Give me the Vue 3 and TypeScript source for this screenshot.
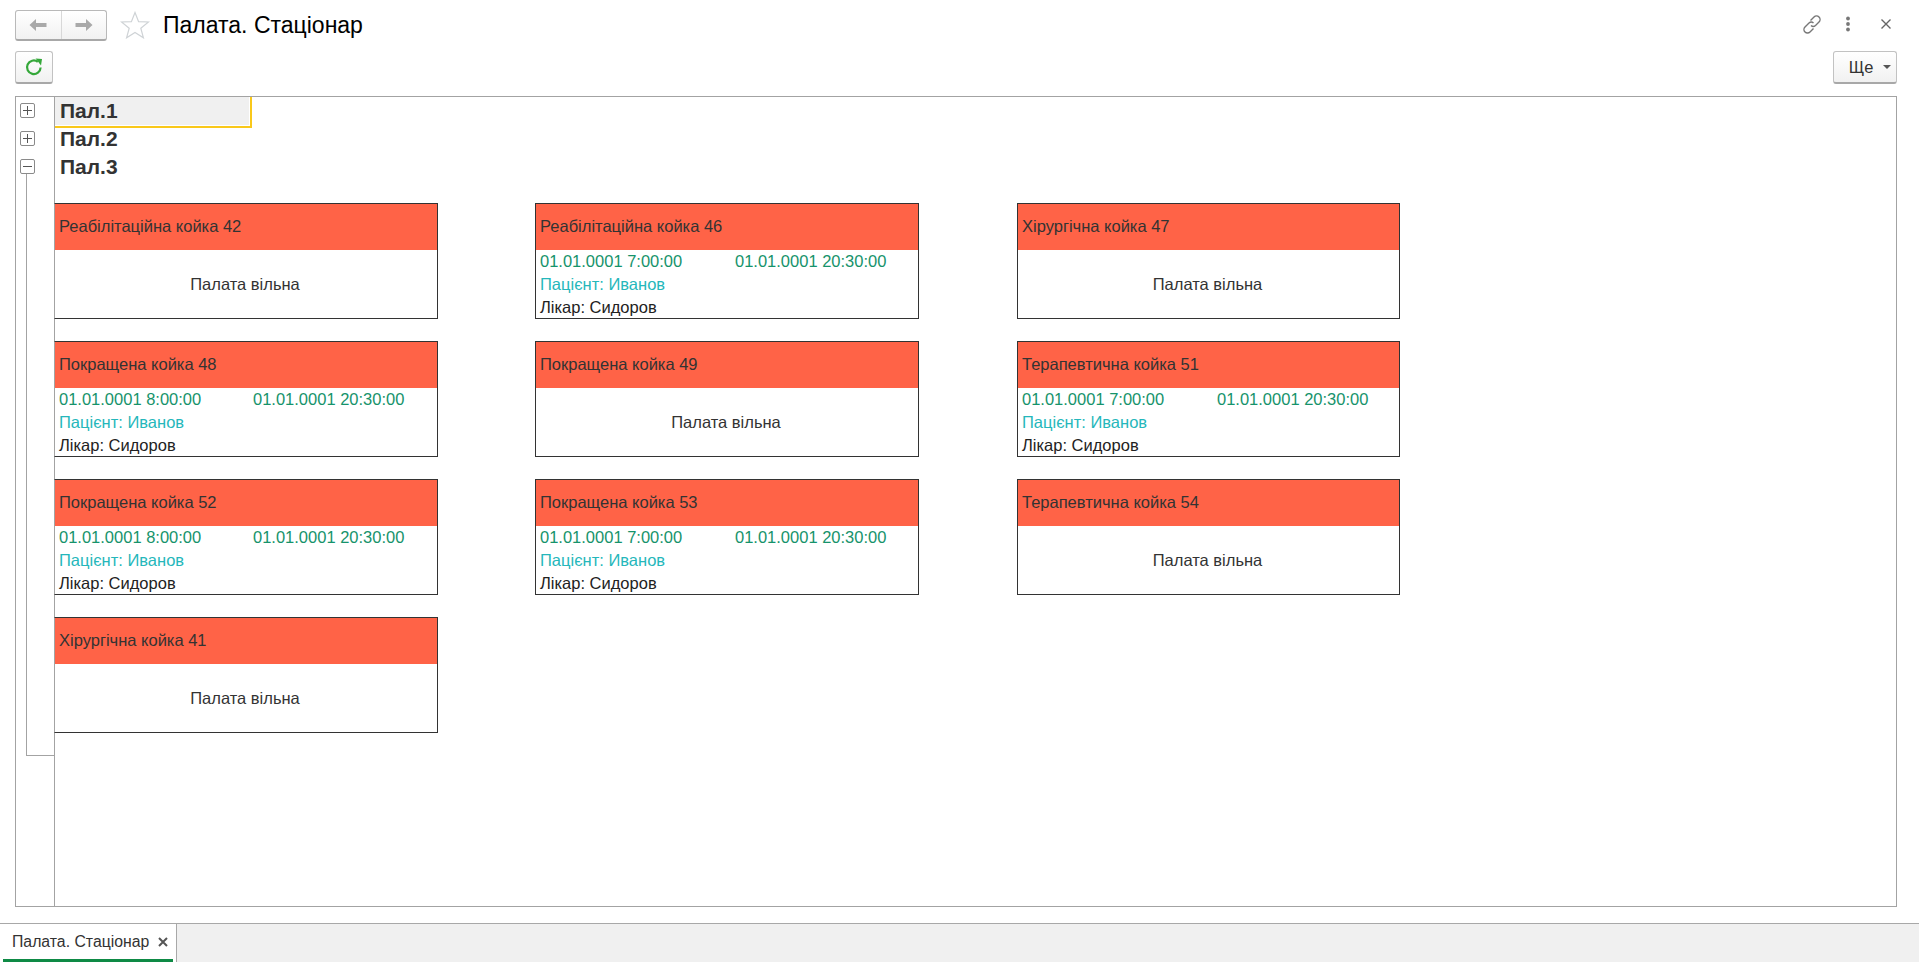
<script setup lang="ts">
interface Bed { name: string; start?: string }
const beds: Bed[] = [
  { name: 'Реабілітаційна койка 42' },
  { name: 'Реабілітаційна койка 46', start: '01.01.0001 7:00:00' },
  { name: 'Хірургічна койка 47' },
  { name: 'Покращена койка 48', start: '01.01.0001 8:00:00' },
  { name: 'Покращена койка 49' },
  { name: 'Терапевтична койка 51', start: '01.01.0001 7:00:00' },
  { name: 'Покращена койка 52', start: '01.01.0001 8:00:00' },
  { name: 'Покращена койка 53', start: '01.01.0001 7:00:00' },
  { name: 'Терапевтична койка 54' },
  { name: 'Хірургічна койка 41' },
]
</script>

<template>
  <div class="page">
    <header class="titlebar">
      <div class="navgroup">
        <button class="navbtn">
          <svg width="18" height="14" viewBox="0 0 18 14"><path d="M0.5 7 L7 1 V5 H17.5 V9 H7 V13 Z" fill="#a9a9a9" /></svg>
        </button>
        <button class="navbtn">
          <svg width="18" height="14" viewBox="0 0 18 14"><path d="M17.5 7 L11 1 V5 H0.5 V9 H11 V13 Z" fill="#a9a9a9" /></svg>
        </button>
      </div>
      <svg class="star" width="30" height="28" viewBox="0 0 30 28"><path d="M15 1.5 L18.6 10.6 L28.5 11 L20.8 17.2 L23.4 26.8 L15 21.4 L6.6 26.8 L9.2 17.2 L1.5 11 L11.4 10.6 Z" fill="#fff" stroke="#cfd3d6" stroke-width="1.2" /></svg>
      <h1 class="title">Палата. Стаціонар</h1>
      <div class="winicons">
        <svg width="22" height="22" viewBox="0 0 22 22" fill="none" stroke="#777" stroke-width="1.4"><path d="M9.5 7.5 L13 4 A3.3 3.3 0 0 1 18 9 L14.5 12.5 A3.3 3.3 0 0 1 10 12.5" /><path d="M12.5 10 A3.3 3.3 0 0 0 8 10 L4 14 A3.3 3.3 0 0 0 9 19 L12.5 15.5" /></svg>
        <svg width="6" height="16" viewBox="0 0 6 16" fill="#777"><circle cx="3" cy="2.5" r="1.9" /><circle cx="3" cy="8" r="1.9" /><circle cx="3" cy="13.5" r="1.9" /></svg>
        <svg class="closeicon" width="12" height="12" viewBox="0 0 12 12" stroke="#666" stroke-width="1.4"><path d="M1.5 1.5 L10.5 10.5 M10.5 1.5 L1.5 10.5" /></svg>
      </div>
    </header>

    <div class="toolbar">
      <button class="btn refresh">
        <svg width="20" height="20" viewBox="0 0 20 20" fill="none"><path d="M16.6 10.5 A6.8 6.8 0 1 1 13.8 4.8" stroke="#35a83a" stroke-width="2.2" /><path d="M11.6 1.4 L18 2 L17 8.6 Z" fill="#35a83a" /></svg>
      </button>
      <button class="btn more">Ще<span class="caret"></span></button>
    </div>

    <main class="frame">
      <div class="gutter">
        <span class="exp plus"></span>
        <span class="exp plus"></span>
        <span class="exp minus"></span>
        <span class="branch"></span>
      </div>
      <div class="tree">
        <div class="group current"><span>Пал.1</span></div>
        <div class="group"><span>Пал.2</span></div>
        <div class="group"><span>Пал.3</span></div>
        <div class="grid">
          <article v-for="bed in beds" :key="bed.name" class="card">
            <div class="cardhead">{{ bed.name }}</div>
            <div v-if="bed.start" class="cardbody">
              <div class="dates"><span class="d1">{{ bed.start }}</span><span>01.01.0001 20:30:00</span></div>
              <div class="patient">Пацієнт: Иванов</div>
              <div class="doctor">Лікар: Сидоров</div>
            </div>
            <div v-else class="free">Палата вільна</div>
          </article>
        </div>
      </div>
    </main>

    <footer class="tabs">
      <div class="tab">
        <span>Палата. Стаціонар</span>
        <svg width="10" height="10" viewBox="0 0 10 10" stroke="#555" stroke-width="2"><path d="M1 1 L9 9 M9 1 L1 9" /></svg>
      </div>
    </footer>
  </div>
</template>

<style>
html, body { margin: 0; background: #fff; overflow: hidden; }
</style>

<style scoped>
.page {
  width: 1919px;
  height: 962px;
  display: flex;
  flex-direction: column;
  font-family: "Liberation Sans", Arial, sans-serif;
  color: #333;
  background: #fff;
}
.titlebar {
  height: 50px;
  flex: none;
  display: flex;
  align-items: center;
  padding: 0 27px 0 15px;
  box-sizing: border-box;
}
.navgroup {
  display: flex;
  width: 92px;
  height: 31px;
  margin-top: 1px;
  box-sizing: border-box;
  border: 1px solid #b9b9b9;
  border-bottom: 2px solid #a8a8a8;
  border-radius: 3px;
  background: linear-gradient(#fff, #f1f1f1);
}
.navbtn {
  flex: 1;
  padding: 0;
  border: 0;
  background: none;
  display: flex;
  align-items: center;
  justify-content: center;
}
.navbtn + .navbtn { border-left: 1px solid #d8d8d8; }
.star { margin-left: 13px; }
.title {
  margin: 0 0 0 13px;
  font-size: 23px;
  font-weight: 400;
  color: #000;
  flex: 1;
}
.winicons {
  display: flex;
  align-items: center;
  gap: 22px;
  margin-top: -2px;
}
.closeicon { margin-left: 7px; }
.toolbar {
  height: 46px;
  flex: none;
  display: flex;
  justify-content: space-between;
  align-items: flex-start;
  padding: 1px 22px 0 15px;
  box-sizing: border-box;
}
.btn {
  height: 33px;
  box-sizing: border-box;
  border: 1px solid #c2c2c2;
  border-bottom: 2px solid #a8a8a8;
  border-radius: 3px;
  background: linear-gradient(#fff, #f1f1f1);
  font-family: inherit;
  padding: 0;
  display: flex;
  align-items: center;
  justify-content: center;
}
.refresh { width: 38px; }
.more {
  width: 64px;
  font-size: 16.5px;
  color: #333;
  padding-left: 10px;
}
.caret {
  margin-left: 10px;
  width: 0;
  height: 0;
  border: 4px solid transparent;
  border-top: 4px solid #555;
  border-bottom: 0;
}
.frame {
  width: 1882px;
  height: 811px;
  flex: none;
  margin-left: 15px;
  box-sizing: border-box;
  border: 1px solid #a3a3a3;
  display: flex;
}
.gutter {
  width: 39px;
  flex: none;
  box-sizing: border-box;
  border-right: 1px solid #a3a3a3;
  display: flex;
  flex-direction: column;
  padding-left: 4px;
}
.exp {
  width: 15px;
  height: 15px;
  box-sizing: border-box;
  border: 1px solid #8a8a8a;
  border-radius: 2px;
  margin-top: 13px;
  background:
    linear-gradient(#555, #555) center / 9px 1px no-repeat,
    #fff;
  position: relative;
  flex: none;
}
.exp:first-child { margin-top: 6px; }
.plus::after {
  content: "";
  position: absolute;
  left: 6px;
  top: 2px;
  width: 1px;
  height: 9px;
  background: #555;
}
.branch {
  width: 28px;
  height: 582px;
  box-sizing: border-box;
  margin-left: 6px;
  border-left: 1px solid #a3a3a3;
  border-bottom: 1px solid #a3a3a3;
  flex: none;
}
.tree { flex: 1; min-width: 0; }
.group {
  height: 28px;
  font-size: 21px;
  font-weight: 700;
  line-height: 28px;
  padding-left: 5px;
  box-sizing: border-box;
}
.group.current {
  width: 197px;
  height: 31px;
  margin-bottom: -3px;
  background: #f0f0f0;
  border-right: 2px solid #f9c81a;
  border-bottom: 2px solid #f9c81a;
  box-shadow: inset 0 -1px 0 #fff, inset -1px 0 0 #fff;
}
.grid {
  margin-top: 22px;
  margin-left: -1px;
  display: grid;
  grid-template-columns: 481px 482px 383px;
  row-gap: 22px;
}
.card {
  height: 116px;
  box-sizing: border-box;
  border: 1px solid #333;
  font-size: 16.5px;
  display: flex;
  flex-direction: column;
}
.card:nth-child(3n + 1) { border-left-color: #a3a3a3; width: 384px; }
.card:nth-child(3n + 2) { width: 384px; }
.card:nth-child(3n + 1) .d1 { width: 194px; }
.cardhead {
  height: 46px;
  flex: none;
  background: #ff6347;
  display: flex;
  align-items: center;
  padding: 0 0 2px 4px;
  box-sizing: border-box;
}
.cardbody {
  padding-left: 4px;
  line-height: 23px;
}
.dates { color: #16936b; display: flex; }
.d1 { width: 195px; }
.patient { color: #25b7bb; }
.doctor { color: #222; line-height: 23px; }
.free {
  flex: 1;
  display: flex;
  align-items: center;
  justify-content: center;
  padding-right: 2px;
}
.tabs {
  margin-top: 16px;
  flex: 1;
  border-top: 1px solid #a8a8a8;
  background: #f0f0f0;
  display: flex;
}
.tab {
  width: 177px;
  box-sizing: border-box;
  background: #fff;
  border-right: 1px solid #a8a8a8;
  padding: 0 0 3px 12px;
  font-size: 15.8px;
  display: flex;
  align-items: center;
  gap: 9px;
  position: relative;
}
.tab::after {
  content: "";
  position: absolute;
  left: 3px;
  right: 3px;
  bottom: 0;
  height: 3px;
  background: #0e8a45;
}
</style>
